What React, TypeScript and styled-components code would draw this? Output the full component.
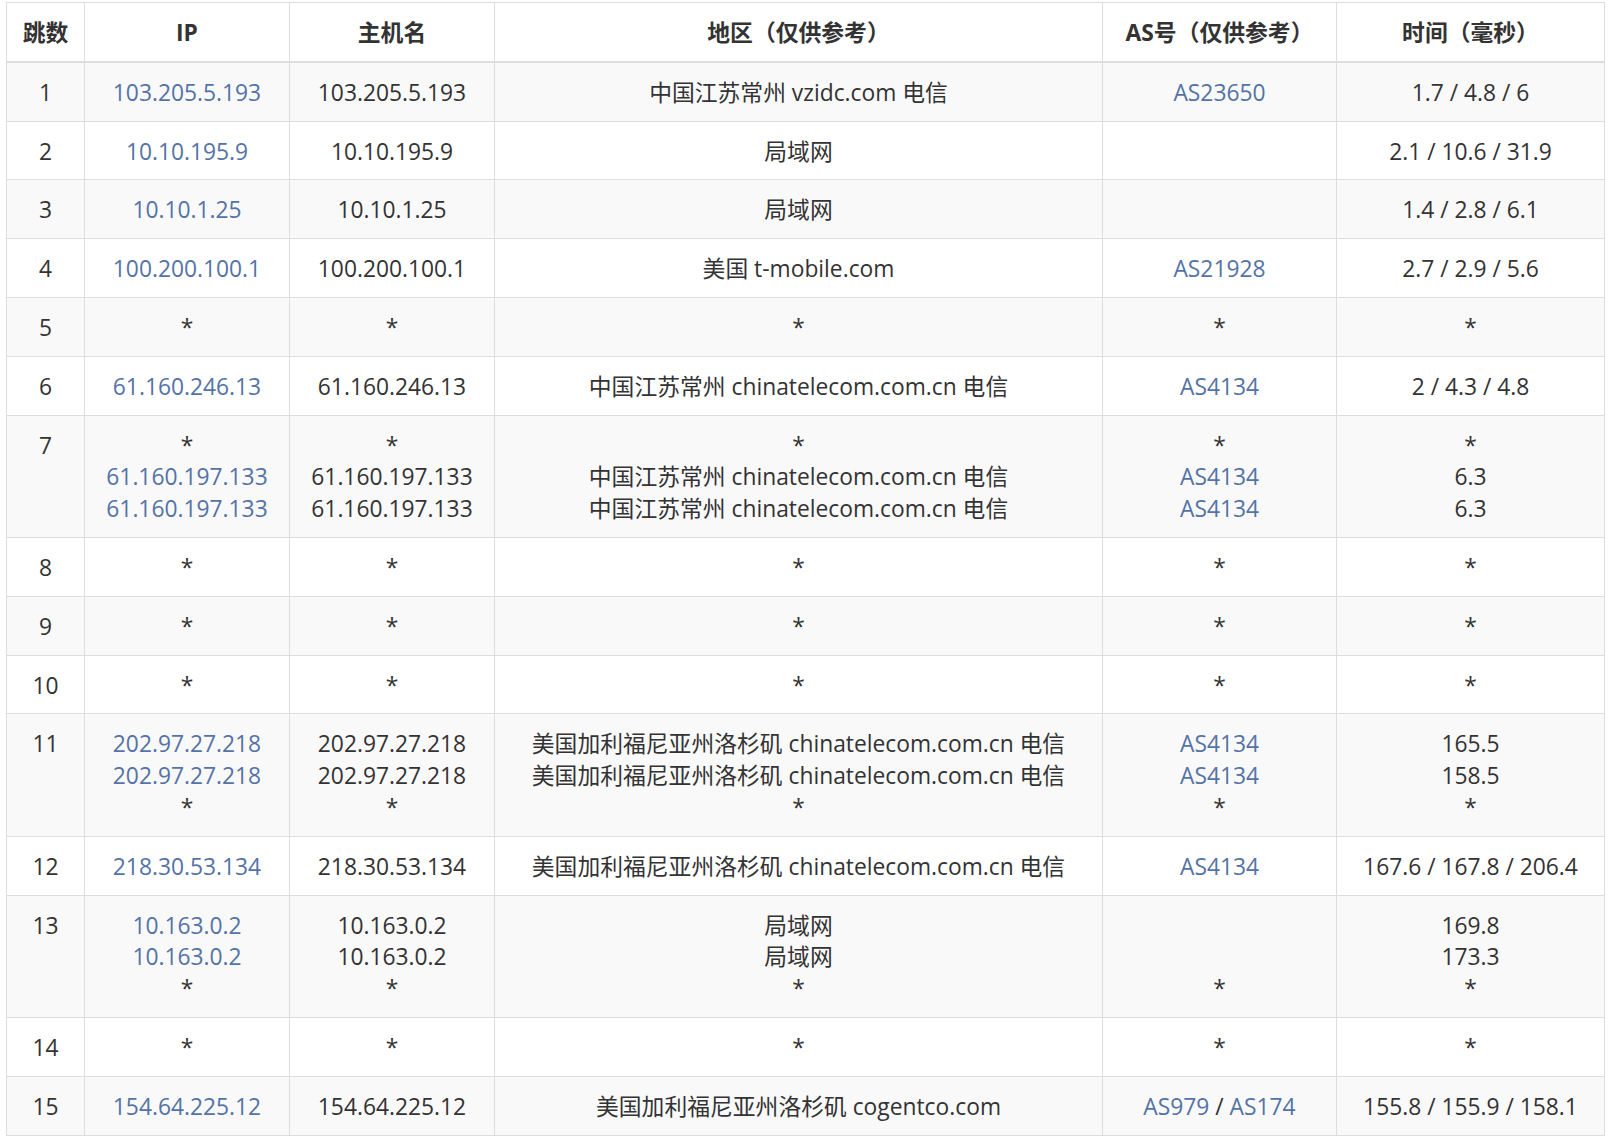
import React from "react";
import styled, { createGlobalStyle } from "styled-components";

const GlobalStyle = createGlobalStyle`
  html, body {
    margin: 0;
    padding: 0;
    background: #ffffff;
  }
  body {
    font-family: "Open Sans", "Noto Sans CJK SC", sans-serif;
    color: #333333;
  }
`;

const Page = styled.div`
  padding: 2px 7px 0 6px;
`;

const Table = styled.table`
  width: 1598px;
  border-collapse: collapse;
  table-layout: fixed;
  font-family: "Open Sans", "Noto Sans CJK SC", sans-serif;
  font-size: 22.8px;
  line-height: 31.8px;
  color: #333333;
  border: 1px solid #dddddd;
`;

const HeadCell = styled.th`
  padding: 14px 8px 12px;
  font-weight: 700;
  text-align: center;
  vertical-align: bottom;
  color: #333333;
  border: 1px solid #dddddd;
  border-bottom: 2px solid #dddddd;
`;

const Row = styled.tr<{ $striped: boolean }>`
  background: ${(p) => (p.$striped ? "#f9f9f9" : "#ffffff")};
`;

const Cell = styled.td`
  padding: 14px 8px 12px;
  text-align: center;
  vertical-align: top;
  border: 1px solid #dddddd;
  white-space: nowrap;
`;

const Line = styled.div`
  min-height: 31.8px;
`;

const Link = styled.a`
  color: #5473a6;
  text-decoration: none;
`;

type Hop = {
  hop: number;
  ip: string[];
  host: string[];
  region: string[];
  as: string[];
  time: string[];
};

const R1 = "中国江苏常州 chinatelecom.com.cn 电信";
const LA = "美国加利福尼亚州洛杉矶 chinatelecom.com.cn 电信";
const star = (n: number): Hop => ({
  hop: n,
  ip: ["*"],
  host: ["*"],
  region: ["*"],
  as: ["*"],
  time: ["*"],
});

const hops: Hop[] = [
  { hop: 1, ip: ["103.205.5.193"], host: ["103.205.5.193"], region: ["中国江苏常州 vzidc.com 电信"], as: ["AS23650"], time: ["1.7 / 4.8 / 6"] },
  { hop: 2, ip: ["10.10.195.9"], host: ["10.10.195.9"], region: ["局域网"], as: [""], time: ["2.1 / 10.6 / 31.9"] },
  { hop: 3, ip: ["10.10.1.25"], host: ["10.10.1.25"], region: ["局域网"], as: [""], time: ["1.4 / 2.8 / 6.1"] },
  { hop: 4, ip: ["100.200.100.1"], host: ["100.200.100.1"], region: ["美国 t-mobile.com"], as: ["AS21928"], time: ["2.7 / 2.9 / 5.6"] },
  star(5),
  { hop: 6, ip: ["61.160.246.13"], host: ["61.160.246.13"], region: [R1], as: ["AS4134"], time: ["2 / 4.3 / 4.8"] },
  { hop: 7, ip: ["*", "61.160.197.133", "61.160.197.133"], host: ["*", "61.160.197.133", "61.160.197.133"], region: ["*", R1, R1], as: ["*", "AS4134", "AS4134"], time: ["*", "6.3", "6.3"] },
  star(8),
  star(9),
  star(10),
  { hop: 11, ip: ["202.97.27.218", "202.97.27.218", "*"], host: ["202.97.27.218", "202.97.27.218", "*"], region: [LA, LA, "*"], as: ["AS4134", "AS4134", "*"], time: ["165.5", "158.5", "*"] },
  { hop: 12, ip: ["218.30.53.134"], host: ["218.30.53.134"], region: [LA], as: ["AS4134"], time: ["167.6 / 167.8 / 206.4"] },
  { hop: 13, ip: ["10.163.0.2", "10.163.0.2", "*"], host: ["10.163.0.2", "10.163.0.2", "*"], region: ["局域网", "局域网", "*"], as: ["", "", "*"], time: ["169.8", "173.3", "*"] },
  star(14),
  { hop: 15, ip: ["154.64.225.12"], host: ["154.64.225.12"], region: ["美国加利福尼亚州洛杉矶 cogentco.com"], as: ["AS979 / AS174"], time: ["155.8 / 155.9 / 158.1"] },
];

const IpLine = ({ v }: { v: string }) =>
  v === "*" || v === "" ? <Line>{v}</Line> : <Line><Link href="#">{v}</Link></Line>;

const AsLine = ({ v }: { v: string }) => {
  if (v === "*" || v === "") return <Line>{v}</Line>;
  const parts = v.split(" / ");
  return (
    <Line>
      {parts.map((p, i) => (
        <React.Fragment key={i}>
          {i > 0 && " / "}
          <Link href="#">{p}</Link>
        </React.Fragment>
      ))}
    </Line>
  );
};

const TextLines = ({ lines }: { lines: string[] }) => (
  <>
    {lines.map((l, i) => (
      <Line key={i}>{l}</Line>
    ))}
  </>
);

export default function App() {
  return (
    <Page>
      <GlobalStyle />
      <Table>
        <colgroup>
          <col style={{ width: 78 }} />
          <col style={{ width: 205 }} />
          <col style={{ width: 205 }} />
          <col style={{ width: 608 }} />
          <col style={{ width: 234 }} />
          <col style={{ width: 268 }} />
        </colgroup>
        <thead>
          <tr>
            <HeadCell>跳数</HeadCell>
            <HeadCell>IP</HeadCell>
            <HeadCell>主机名</HeadCell>
            <HeadCell>地区（仅供参考）</HeadCell>
            <HeadCell>AS号（仅供参考）</HeadCell>
            <HeadCell>时间（毫秒）</HeadCell>
          </tr>
        </thead>
        <tbody>
          {hops.map((h, idx) => (
            <Row key={h.hop} $striped={idx % 2 === 0}>
              <Cell>{h.hop}</Cell>
              <Cell>
                {h.ip.map((v, i) => (
                  <IpLine key={i} v={v} />
                ))}
              </Cell>
              <Cell>
                <TextLines lines={h.host} />
              </Cell>
              <Cell>
                <TextLines lines={h.region} />
              </Cell>
              <Cell>
                {h.as.map((v, i) => (
                  <AsLine key={i} v={v} />
                ))}
              </Cell>
              <Cell>
                <TextLines lines={h.time} />
              </Cell>
            </Row>
          ))}
        </tbody>
      </Table>
    </Page>
  );
}
